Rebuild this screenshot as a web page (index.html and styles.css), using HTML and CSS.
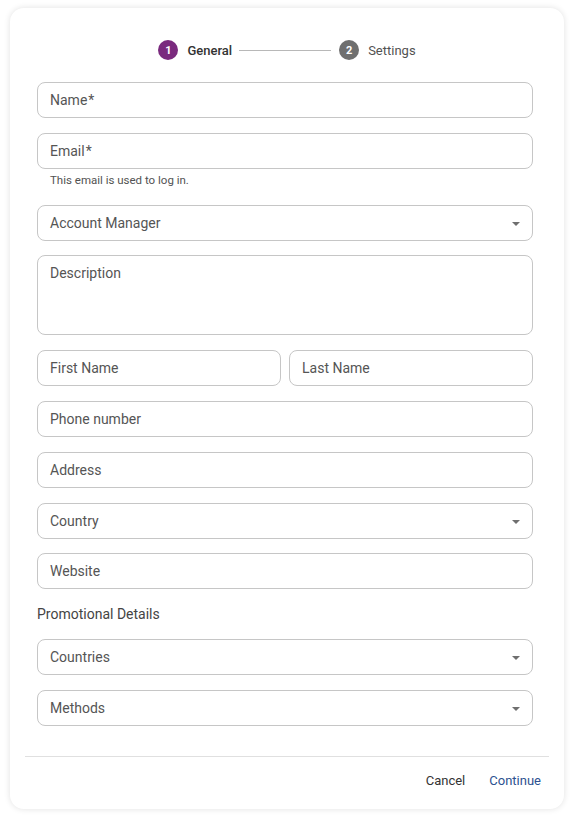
FILE: index.html
```html
<!DOCTYPE html>
<html lang="en">
<head>
<meta charset="utf-8">
<title>New account</title>
<link rel="stylesheet" href="styles.css">
</head>
<body>
<div class="card">
  <div class="stepper">
    <div class="step step-active"><span class="step-num">1</span><span class="step-label">General</span></div>
    <div class="step-line"></div>
    <div class="step"><span class="step-num">2</span><span class="step-label">Settings</span></div>
  </div>

  <form class="form">
    <div class="field"><span class="ph">Name<span class="req">*</span></span></div>
    <div class="field-group">
      <div class="field"><span class="ph">Email<span class="req">*</span></span></div>
      <div class="helper">This email is used to log in.</div>
    </div>
    <div class="field select"><span class="ph">Account Manager</span><span class="caret"></span></div>
    <div class="field textarea"><span class="ph">Description</span></div>
    <div class="row">
      <div class="field"><span class="ph">First Name</span></div>
      <div class="field"><span class="ph">Last Name</span></div>
    </div>
    <div class="field"><span class="ph">Phone number</span></div>
    <div class="field"><span class="ph">Address</span></div>
    <div class="field select"><span class="ph">Country</span><span class="caret"></span></div>
    <div class="field"><span class="ph">Website</span></div>
    <div class="section-label">Promotional Details</div>
    <div class="field select"><span class="ph">Countries</span><span class="caret"></span></div>
    <div class="field select"><span class="ph">Methods</span><span class="caret"></span></div>
  </form>

  <div class="divider"></div>
  <div class="footer">
    <button type="button" class="btn btn-cancel">Cancel</button>
    <button type="button" class="btn btn-continue">Continue</button>
  </div>
</div>
</body>
</html>
```

FILE: styles.css
```css
* { box-sizing: border-box; }

body {
  margin: 0;
  background: #ffffff;
  font-family: Roboto, "Noto Sans", sans-serif;
  color: #333333;
}

.card {
  margin: 8px 10px;
  width: 554px;
  height: 801px;
  background: #ffffff;
  border-radius: 14px;
  box-shadow: 0 0 6px rgba(0, 0, 0, 0.12);
  padding-top: 32px;
}

.stepper {
  display: flex;
  align-items: center;
  justify-content: center;
  height: 20px;
}

.step {
  display: flex;
  align-items: center;
  gap: 9px;
}

.step-num {
  width: 20px;
  height: 20px;
  border-radius: 50%;
  background: #6f6f6f;
  color: #ffffff;
  font-size: 11px;
  font-weight: 700;
  display: flex;
  align-items: center;
  justify-content: center;
}

.step-active .step-num { background: #7a2a7e; }

.step-label {
  font-size: 13px;
  color: #525252;
}

.step-active .step-label {
  color: #333333;
  font-weight: 500;
}

.step-line {
  width: 92px;
  height: 1px;
  background: #b8b8b8;
  margin: 0 8px 0 7px;
}

.form {
  display: flex;
  flex-direction: column;
  gap: 14.8px;
  padding: 22px 31px 0 27px;
}

.field-group {
  display: flex;
  flex-direction: column;
}

.field {
  position: relative;
  height: 36px;
  border: 1px solid #c6c6c6;
  border-radius: 8px;
  padding: 0 12px;
  display: flex;
  align-items: center;
  font-size: 14px;
  color: #555555;
}

.req { margin-left: 1px; }

.textarea {
  height: 80px;
  align-items: flex-start;
  padding-top: 9px;
}

.caret {
  position: absolute;
  right: 12px;
  top: 16px;
  width: 0;
  height: 0;
  border-left: 4.5px solid transparent;
  border-right: 4.5px solid transparent;
  border-top: 4.5px solid #6f6f6f;
}

.helper {
  font-size: 11.5px;
  color: #525252;
  padding: 4px 0 0 13px;
  line-height: 14px;
  height: 21px;
}

.row {
  display: grid;
  grid-template-columns: 1fr 1fr;
  gap: 8px;
}

.section-label {
  font-size: 14px;
  color: #444444;
  line-height: 20px;
}

.divider {
  height: 1px;
  background: #e0e0e0;
  margin: 30px 15px 0 15px;
}

.footer {
  display: flex;
  justify-content: flex-end;
  gap: 24px;
  padding: 14px 23px 0 0;
}

.btn {
  background: none;
  border: none;
  padding: 0;
  font-family: inherit;
  font-size: 13px;
  line-height: 20px;
  cursor: pointer;
}

.btn-cancel { color: #333333; }
.btn-continue { color: #2d5190; }
```
